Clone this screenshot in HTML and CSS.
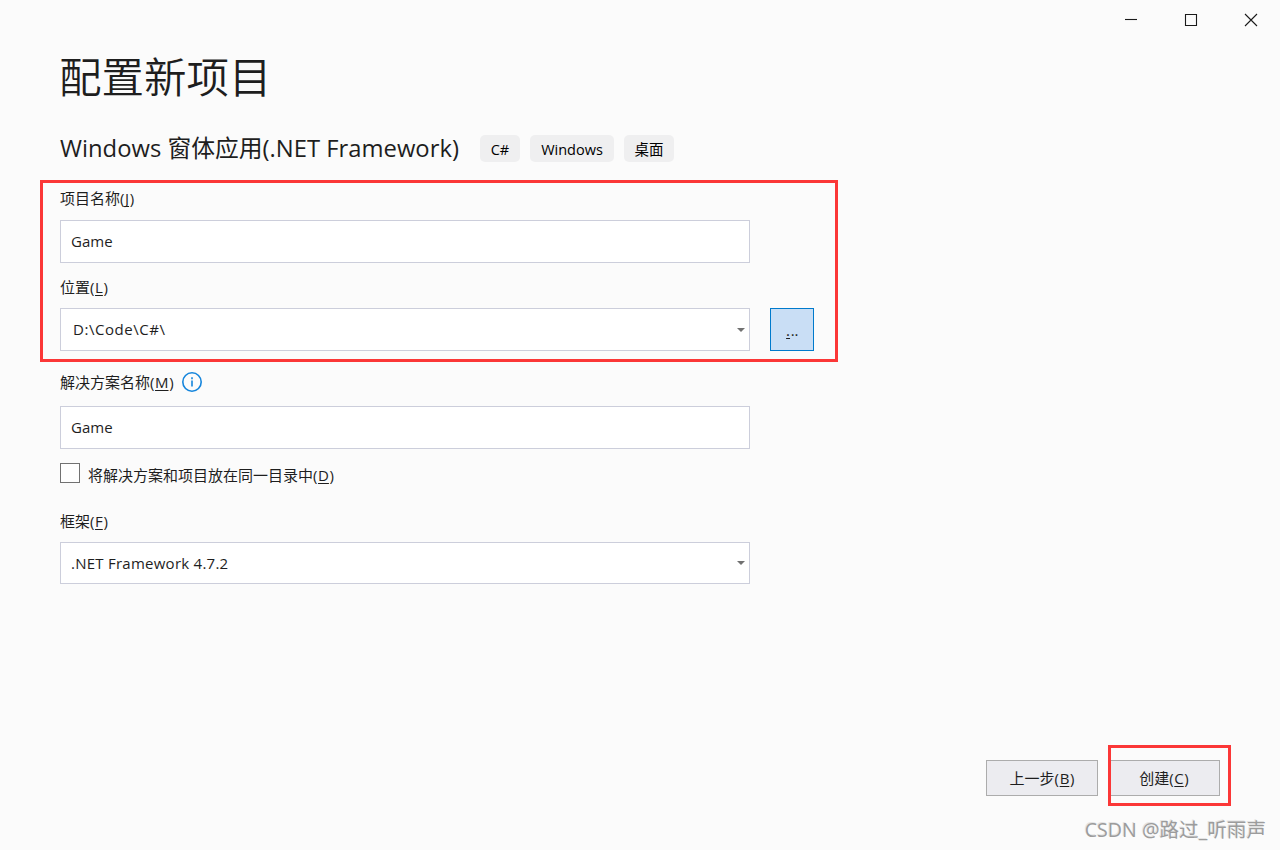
FILE: index.html
```
<!DOCTYPE html>
<html lang="zh-CN">
<head>
	<meta charset="UTF-8">
	<meta name="viewport" content="width=device-width, initial-scale=1.0">
	<title>配置新项目</title>
	<link rel="stylesheet" href="styles.css">
</head>
<body>
	<div class="window">
		<header class="titlebar">
			<svg class="titlebar__icon" viewBox="0 0 14 14"><path d="M1 6.5h12"/></svg>
			<svg class="titlebar__icon" viewBox="0 0 14 14"><path d="M1.5 1.5h11v11h-11z"/></svg>
			<svg class="titlebar__icon" viewBox="0 0 14 14"><path d="M1 1l12 12M13 1L1 13"/></svg>
		</header>

		<main class="content">
			<h1 class="title">配置新项目</h1>

			<div class="template">
				<h2 class="template__name">Windows 窗体应用(.NET Framework)</h2>
				<span class="tag tag--lang">C#</span>
				<span class="tag tag--platform">Windows</span>
				<span class="tag tag--type">桌面</span>
			</div>

			<form class="form">
				<div class="field field--name">
					<div class="field__label">项目名称(<u>J</u>)</div>
					<div class="field__box">Game</div>
				</div>

				<div class="field field--location">
					<div class="field__label">位置(<u>L</u>)</div>
					<div class="field__row">
						<div class="field__box field__box--combo">
							<span>D:\Code\C#\</span>
							<svg class="arrow" viewBox="0 0 8 4"><path d="M0 0h8L4 4z"/></svg>
						</div>
						<button type="button" class="browse"><u>.</u>..</button>
					</div>
				</div>

				<div class="field field--solution">
					<div class="field__label">
						解决方案名称(<u>M</u>)
						<svg class="info" viewBox="0 0 20 20">
							<circle cx="10" cy="10" r="9.2"/>
							<path d="M10 8.5v6M10 5.3v2"/>
						</svg>
					</div>
					<div class="field__box">Game</div>
				</div>

				<div class="check">
					<span class="check__box"></span>
					<span class="check__text">将解决方案和项目放在同一目录中(<u>D</u>)</span>
				</div>

				<div class="field field--framework">
					<div class="field__label">框架(<u>F</u>)</div>
					<div class="field__box field__box--combo">
						<span>.NET Framework 4.7.2</span>
						<svg class="arrow" viewBox="0 0 8 4"><path d="M0 0h8L4 4z"/></svg>
					</div>
				</div>
			</form>
		</main>

		<footer class="footer">
			<button type="button" class="btn">上一步(<u>B</u>)</button>
			<button type="button" class="btn">创建(<u>C</u>)</button>
		</footer>

		<div class="watermark">CSDN @路过_听雨声</div>

		<div class="mark mark--fields"></div>
		<div class="mark mark--create"></div>
	</div>
</body>
</html>
```

FILE: styles.css
```
*, *::after, *::before {
	box-sizing: border-box;
}

:root {
	--text: #1e1e1e;
	--border: #cccedb;
	--mark: #fb3737;
}

body {
	margin: 0;
	background: #fbfbfb;
	color: var(--text);
	font-family: "Open Sans", "Noto Sans CJK SC", sans-serif;
	font-size: 15px;
	overflow: hidden;
}

u {
	margin: 0 .6px;
	text-decoration: underline 1px;
	text-underline-offset: 2px;
	text-decoration-skip-ink: none;
}

.window {
	position: relative;
	display: flex;
	flex-direction: column;
	width: 1280px;
	height: 850px;
}

.titlebar {
	display: flex;
	justify-content: flex-end;
	align-items: center;
	gap: 46px;
	height: 40px;
	padding-right: 22px;
}

.titlebar__icon {
	width: 14px;
	height: 14px;
	fill: none;
	stroke: #1a1a1a;
	stroke-width: 1.1;
}

.content {
	flex: 1;
	padding: 5px 60px 0;
}

.title {
	height: 60px;
	margin: 0 0 0 -1px;
	font-family: "Noto Sans CJK SC", sans-serif;
	font-size: 42.5px;
	font-weight: 350;
	line-height: 60px;
}

.template {
	display: flex;
	align-items: center;
	height: 27px;
	margin-top: 30px;
}

.template__name {
	width: 420px;
	margin: 0;
	font-size: 23.8px;
	font-weight: 400;
	line-height: 27px;
	white-space: nowrap;
}

.tag {
	height: 27px;
	margin-right: 10px;
	border-radius: 5px;
	background: #efeff0;
	color: #000;
	font-size: 14.5px;
	line-height: 29px;
	text-align: center;
}

.tag--lang {
	width: 40px;
}

.tag--platform {
	width: 84px;
}

.tag--type {
	width: 50px;
}

.form {
	width: 754px;
	margin-top: 26px;
}

.field__label {
	display: flex;
	align-items: center;
	height: 20px;
	margin-bottom: 11px;
	line-height: 20px;
}

.field__row {
	display: flex;
	gap: 20px;
}

.field__box {
	display: flex;
	align-items: center;
	width: 690px;
	height: 43px;
	padding: 0 4px 2px 10px;
	border: 1px solid var(--border);
	background: #fff;
}

.field__box--combo {
	justify-content: space-between;
	padding-bottom: 0;
	letter-spacing: .25px;
}

.field--name .field__label {
	margin-bottom: 12px;
}

.field--location {
	margin-top: 14px;
}

.field--location .field__box {
	padding-left: 12px;
	letter-spacing: .55px;
}

.field--location .field__box span {
	margin-bottom: 2px;
}

.field--solution {
	margin-top: 21px;
}

.field--solution .field__label {
	margin-bottom: 14px;
}

.field--framework {
	margin-top: 28px;
}

.field--framework .field__box {
	height: 42px;
}

.arrow {
	width: 8px;
	height: 4px;
	fill: #717171;
}

.browse {
	width: 44px;
	height: 43px;
	padding: 1px 0 0;
	border: 1px solid #007acc;
	background: #c9def5;
	color: var(--text);
	font: inherit;
}

.info {
	width: 20px;
	height: 20px;
	margin-left: 8px;
	fill: none;
	stroke: #1585dc;
	stroke-width: 1.6;
}

.check {
	display: flex;
	gap: 8px;
	height: 20px;
	margin-top: 14px;
}

.check__box {
	width: 20px;
	height: 20px;
	border: 1px solid #717171;
	background: #fefefe;
}

.check__text {
	line-height: 24px;
}

.footer {
	display: flex;
	justify-content: flex-end;
	gap: 10px;
	padding-right: 60px;
}

.btn {
	width: 112px;
	height: 36px;
	padding: 0 0 2px;
	border: 1px solid #acacac;
	background: #ececf0;
	color: var(--text);
	font: inherit;
}

.watermark {
	height: 54px;
	padding: 19px 14px 0 0;
	color: #9c9c9c;
	font-size: 19.6px;
	line-height: 30px;
	text-align: right;
	text-shadow: -1px -1px 0 #e4e4e4;
}

/* red frames over the form */
.mark {
	position: absolute;
	border: 3px solid var(--mark);
	pointer-events: none;
}

.mark--fields {
	top: 180px;
	left: 40px;
	width: 798px;
	height: 182px;
}

.mark--create {
	top: 745px;
	left: 1108px;
	width: 123px;
	height: 61px;
}
```
